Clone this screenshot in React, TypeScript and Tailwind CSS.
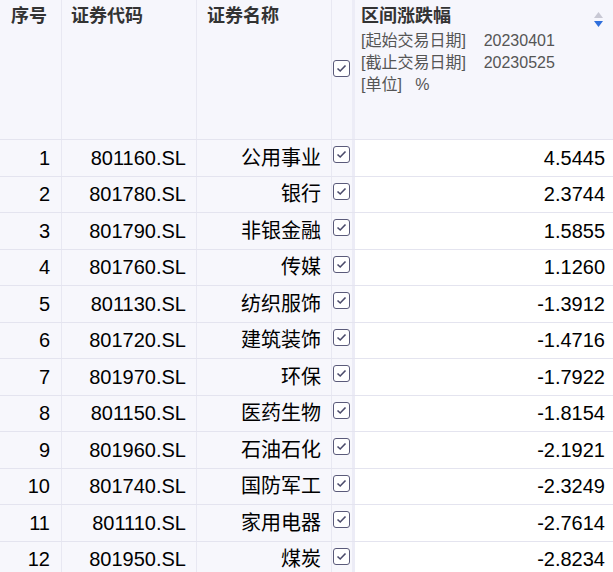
const rows: [string, string, string][] = [
  ["801160.SL", "公用事业", "4.5445"],
  ["801780.SL", "银行", "2.3744"],
  ["801790.SL", "非银金融", "1.5855"],
  ["801760.SL", "传媒", "1.1260"],
  ["801130.SL", "纺织服饰", "-1.3912"],
  ["801720.SL", "建筑装饰", "-1.4716"],
  ["801970.SL", "环保", "-1.7922"],
  ["801150.SL", "医药生物", "-1.8154"],
  ["801960.SL", "石油石化", "-2.1921"],
  ["801740.SL", "国防军工", "-2.3249"],
  ["801110.SL", "家用电器", "-2.7614"],
  ["801950.SL", "煤炭", "-2.8234"],
];

const font = { fontFamily: '"Liberation Sans", "Noto Sans CJK SC", sans-serif' };

function Check() {
  return (
    <div className="w-[17px] h-[17px] rounded-[3px] border border-[#5a5a7a] bg-white flex items-center justify-center">
      <svg width="11" height="9" viewBox="0 0 11 9">
        <path d="M1.5 4.5 L4.2 7 L9.5 1.5" fill="none" stroke="#4a4a6a" strokeWidth="1.6" />
      </svg>
    </div>
  );
}

export default function App() {
  return (
    <div className="w-[613px] h-[572px] overflow-hidden bg-[#f7f7fc] text-black" style={font}>
      <div className="flex h-[140px] border-b border-[#e4e4ef] bg-[#f6f6fc] text-[#333] font-bold text-[18px]">
        <div className="w-[62px] border-r border-[#e8e8f2] pt-[3px] pl-[11px]">序号</div>
        <div className="w-[135px] border-r border-[#e8e8f2] pt-[3px] pl-[9px]">证券代码</div>
        <div className="w-[135px] border-r border-[#e8e8f2] pt-[3px] pl-[10px]">证券名称</div>
        <div className="w-[20px] pt-[60px] pl-[1px]"><Check /></div>
        <div className="flex-1 relative pl-[6px] pt-[3px] border-l-[3px] border-[#ececf6]">
          <div>区间涨跌幅</div>
          <div className="font-normal text-[16px] text-[#555] leading-[22px]">
            <div>[起始交易日期]&nbsp;&nbsp;&nbsp;&nbsp;20230401</div>
            <div>[截止交易日期]&nbsp;&nbsp;&nbsp;&nbsp;20230525</div>
            <div>[单位]&nbsp;&nbsp;&nbsp;%</div>
          </div>
          <div className="absolute right-[10px] top-[12px] flex flex-col gap-[3px]">
            <svg width="9" height="6"><path d="M0 6 L4.5 0 L9 6Z" fill="#c8c8d4" /></svg>
            <svg width="9" height="6"><path d="M0 0 L4.5 6 L9 0Z" fill="#2f6fdc" /></svg>
          </div>
        </div>
      </div>
      {rows.map(([code, name, val], i) => (
        <div key={code} className="flex h-[36.5px] border-b border-[#e4e4ef] text-[20px]">
          <div className="w-[62px] border-r border-[#e8e8f2] flex items-center justify-end pr-[11px]">{i + 1}</div>
          <div className="w-[135px] border-r border-[#e8e8f2] flex items-center justify-end pr-[10px]">{code}</div>
          <div className="w-[135px] border-r border-[#e8e8f2] flex items-center justify-end pr-[10px]">{name}</div>
          <div className="w-[20px] pt-[6px] pl-[1px]"><Check /></div>
          <div className="flex-1 bg-white border-l-[3px] border-[#ececf6] flex items-center justify-end pr-[8px]">{val}</div>
        </div>
      ))}
    </div>
  );
}
